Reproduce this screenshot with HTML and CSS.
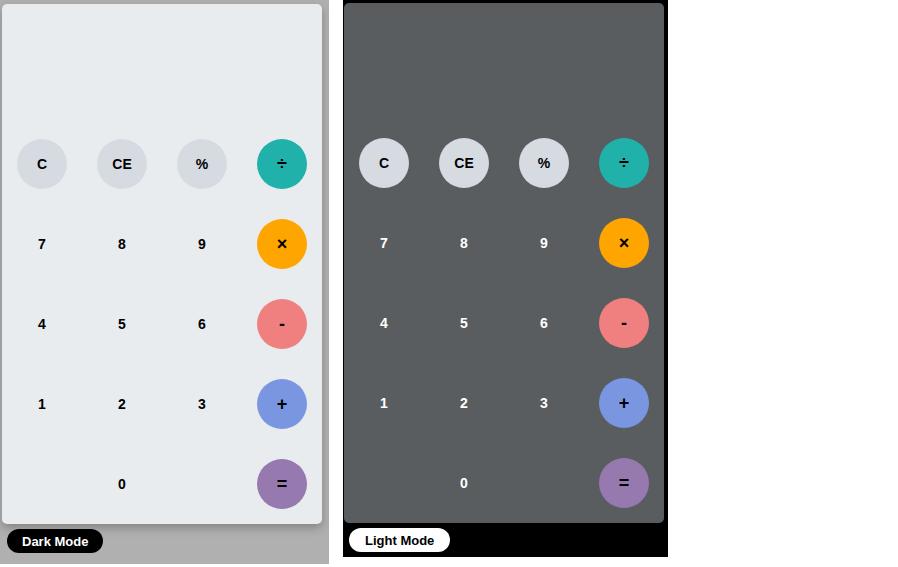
FILE: index.html
```html
<!DOCTYPE html>
<html>
<head>
<meta charset="utf-8">
<link rel="stylesheet" href="styles.css">
</head>
<body>
<div class="screens">
  <div class="frame frame-light">
    <div class="calc calc-light">
      <div class="display"></div>
      <div class="keys">
        <div class="cell"><button class="key fn">C</button></div>
        <div class="cell"><button class="key fn">CE</button></div>
        <div class="cell"><button class="key fn">%</button></div>
        <div class="cell"><button class="key op div">÷</button></div>
        <div class="cell"><button class="key num">7</button></div>
        <div class="cell"><button class="key num">8</button></div>
        <div class="cell"><button class="key num">9</button></div>
        <div class="cell"><button class="key op mul">×</button></div>
        <div class="cell"><button class="key num">4</button></div>
        <div class="cell"><button class="key num">5</button></div>
        <div class="cell"><button class="key num">6</button></div>
        <div class="cell"><button class="key op sub">-</button></div>
        <div class="cell"><button class="key num">1</button></div>
        <div class="cell"><button class="key num">2</button></div>
        <div class="cell"><button class="key num">3</button></div>
        <div class="cell"><button class="key op add">+</button></div>
        <div class="cell"></div>
        <div class="cell"><button class="key num">0</button></div>
        <div class="cell"></div>
        <div class="cell"><button class="key op eq">=</button></div>
      </div>
    </div>
    <button class="toggle toggle-dark">Dark Mode</button>
  </div>
  <div class="frame frame-dark">
    <div class="calc calc-dark">
      <div class="display"></div>
      <div class="keys">
        <div class="cell"><button class="key fn">C</button></div>
        <div class="cell"><button class="key fn">CE</button></div>
        <div class="cell"><button class="key fn">%</button></div>
        <div class="cell"><button class="key op div">÷</button></div>
        <div class="cell"><button class="key num">7</button></div>
        <div class="cell"><button class="key num">8</button></div>
        <div class="cell"><button class="key num">9</button></div>
        <div class="cell"><button class="key op mul">×</button></div>
        <div class="cell"><button class="key num">4</button></div>
        <div class="cell"><button class="key num">5</button></div>
        <div class="cell"><button class="key num">6</button></div>
        <div class="cell"><button class="key op sub">-</button></div>
        <div class="cell"><button class="key num">1</button></div>
        <div class="cell"><button class="key num">2</button></div>
        <div class="cell"><button class="key num">3</button></div>
        <div class="cell"><button class="key op add">+</button></div>
        <div class="cell"></div>
        <div class="cell"><button class="key num">0</button></div>
        <div class="cell"></div>
        <div class="cell"><button class="key op eq">=</button></div>
      </div>
    </div>
    <button class="toggle toggle-light">Light Mode</button>
  </div>
</div>
</body>
</html>
```

FILE: styles.css
```css
* { box-sizing: border-box; }
body {
  margin: 0;
  background: #ffffff;
  font-family: "Liberation Sans", Arial, sans-serif;
}
.screens {
  display: flex;
  align-items: flex-start;
  gap: 14px;
}
.frame {
  display: flex;
  flex-direction: column;
  align-items: flex-start;
}
.frame-light {
  width: 329px;
  height: 564px;
  background: #b0b0b0;
  padding: 4px 0 0 2px;
}
.frame-dark {
  width: 325px;
  height: 557px;
  background: #000000;
  padding: 3px 0 0 1px;
}
.calc {
  width: 320px;
  height: 520px;
  border-radius: 5px;
  display: flex;
  flex-direction: column;
}
.calc-light {
  background: #e8ecef;
  box-shadow: 0 4px 10px rgba(0, 0, 0, 0.25);
}
.calc-dark {
  background: #5a5d60;
}
.display {
  height: 120px;
}
.keys {
  display: grid;
  grid-template-columns: repeat(4, 80px);
  grid-auto-rows: 80px;
}
.cell {
  display: flex;
  align-items: center;
  justify-content: center;
}
.key {
  width: 50px;
  height: 50px;
  border: none;
  border-radius: 50%;
  padding: 0;
  font-family: "Liberation Sans", Arial, sans-serif;
  font-size: 14px;
  font-weight: bold;
  color: #000;
  background: transparent;
  display: flex;
  align-items: center;
  justify-content: center;
}
.fn { background: #d5dbe0; }
.calc-dark .num { color: #ffffff; }
.op { font-size: 18px; }
.div { background: #20b2aa; }
.mul { background: #ffa500; }
.sub { background: #f08080; }
.add { background: #7b96e0; }
.eq { background: #9679ae; }
.toggle {
  margin: 5px 0 0 5px;
  height: 24px;
  border: none;
  border-radius: 12px;
  padding: 0 15px;
  font-family: "Liberation Sans", Arial, sans-serif;
  font-size: 13px;
  font-weight: bold;
}
.toggle-dark {
  background: #000;
  color: #fff;
}
.toggle-light {
  background: #fff;
  color: #000;
  padding: 0 16px;
}
```
